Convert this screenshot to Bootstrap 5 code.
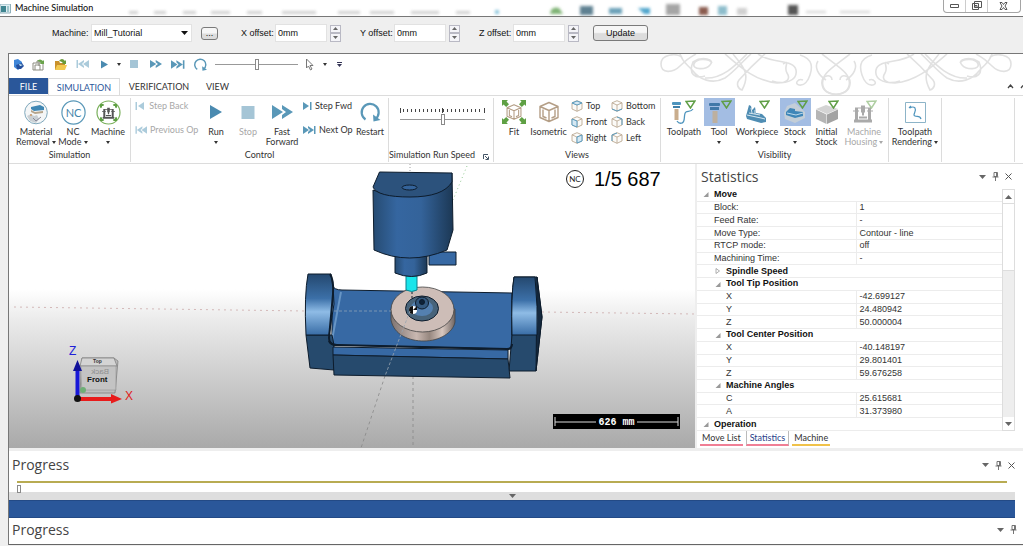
<!DOCTYPE html>
<html lang="en">
<head>
<meta charset="utf-8">
<meta name="viewport" content="width=device-width, initial-scale=1">
<title>Machine Simulation</title>
<link href="https://cdn.jsdelivr.net/npm/bootstrap@5.3.0/dist/css/bootstrap.min.css" rel="stylesheet">
<style>
:root{--ui:Lato,"Open Sans",sans-serif;--head:"Open Sans","Noto Sans",sans-serif;--cls:"Liberation Sans",sans-serif;--navy:#2a579a;--rule:#dcdcdc}
body{font-family:var(--ui);font-size:9px;line-height:10px;color:#333;background:#efefef;min-height:100vh;overflow:hidden}
button,input,select{font:inherit;color:inherit}
button{border:0;background:none;padding:0}
svg{display:block}
.titlebar{height:17px;background:#fff;border-bottom:1px solid #777;position:relative}
.titlebar h1{font-size:9px;line-height:15px;margin:0;color:#111}
.glass{position:absolute;left:0;top:0;width:100%;height:16px}
.winbtns{height:13px;border:1px solid #a5a5a5;border-top:0;border-radius:0 0 4px 4px;background:#fff;width:78px;margin-right:2px;position:relative}
.winbtns button{flex:1 1 22px;display:flex;justify-content:center;align-items:center}
.winbtns button+button{border-left:1px solid #ccc}
.winbtns button:last-child{flex-basis:34px}
.setup{height:36px;font-family:var(--cls);color:#111;padding:0 0 4px 52px}
.setup label{width:34px;white-space:nowrap}
.setup label:first-child{width:39px}
.setup input,.setup select{height:18px;border:1px solid #e2e2e2;background:#fff;padding:0 2px;border-radius:0;outline:0}
.setup select{width:101px;appearance:none}
.combo{position:relative}
.combo svg{position:absolute;right:4px;top:7px}
.setup input{width:52px}
.spin{width:11px;height:17px;display:flex;flex-direction:column;margin:0 19px 0 3px}
.spin:nth-last-child(2){margin-right:14px}
.spin button{flex:1;border:1px solid #b9b9c4;background:#f4f4f8;display:flex;align-items:center;justify-content:center}
.winbtn{border:1px solid #7a7a7a;border-radius:3px;background:linear-gradient(#f6f6f6 45%,#dcdcdc 55%);height:16px;line-height:13px;width:55px}
.winbtn.browse{width:17px;height:13px;line-height:8px;margin:0 23px 0 9px}
.shell{margin-left:8px;background:#fff;border-left:1px solid #777;border-top:1px solid #777}
.qat{height:24px;position:relative}
.qat button{width:22px;height:20px;display:flex;align-items:center;justify-content:center}
.qat .narrow{width:10px}
.swirl{position:absolute;right:6px;top:0}
.tabs{height:17px}
.tabs button{height:16px;line-height:15px}
.tabs .tab-file{background:var(--navy);color:#fff;width:39px}
.tabs .tab-on{border:1px solid var(--rule);border-bottom:0;background:#fff;color:var(--navy);width:72px;height:17px}
.ribbon{border-top:1px solid var(--rule);border-bottom:1px solid var(--rule);height:69px;padding-top:2px}
.grp{border-right:1px solid var(--rule);height:64px;display:flex;flex-direction:column;flex:none;justify-content:space-between}
.grp>footer{text-align:center;height:12px;line-height:10px;white-space:nowrap}
.big{display:flex;flex-direction:column;align-items:center;flex:none;white-space:nowrap;line-height:10px}
.big .ico{height:28px;width:31px;display:flex;align-items:center;justify-content:center;margin-bottom:1px}
.big.on .ico{background:#a3bde3}
.mini{display:flex;align-items:center;gap:3px;height:16px;white-space:nowrap}
.off{color:#a8a8a8}
.car{display:inline-block;border:2px solid transparent;border-top:3px solid currentColor;border-bottom:0;vertical-align:1px}
.speed{padding:10px 8px 0 11px}
input[type=range]{appearance:none;background:transparent;height:12px;margin:0;display:block}
input[type=range]::-webkit-slider-runnable-track{height:1px;background:#999}
input[type=range]::-webkit-slider-thumb{appearance:none;width:4px;height:11px;margin-top:-5px;border:1px solid #8a8a8a;background:#fff;border-radius:0}
.work{height:284px}
.view{min-width:0;background:linear-gradient(#fff 44%,#e9e9e9 56%,#a9a9a9)}
.stats{width:328px;border-left:2px solid #eee}
.pane-h{height:25px;padding:0 10px 0 4px}
.pane-h h2,.prog h2{font-family:var(--head);font-size:14px;line-height:20px;margin:0;color:#444}
.tools{display:flex;gap:3px}
.tools button{width:10px;height:10px;display:flex;align-items:center;justify-content:center}
.sheet{height:242px;padding-right:7px}
.sheet table{width:305px;height:100%;font-family:var(--cls);line-height:11px;color:#333}
.sheet th,.sheet td{padding:0 0 0 17px;border-bottom:1px solid #ececec;font-weight:400}
.sheet td{padding-left:3px;border-left:1px solid #ececec;width:146px}
.sheet .hd{font-weight:700;color:#111;padding-left:6px}
.sheet .sub .hd{padding-left:18px}
.sheet .in th{padding-left:29px}
.tw{display:inline-block;width:6px;margin-right:5px}
.sbar{width:13px;background:#eee;border:1px solid #ddd}
.sbar button{height:13px;background:#fff;display:flex;align-items:center;justify-content:center}
.sbar i{height:68px;background:#fff;border:1px solid #ddd;border-width:1px 0}
.ptabs button{height:15px;border-bottom:2px solid #f07f95;margin-left:3px;padding:0 2px}
.ptabs .cur{border-left:1px solid #bbb;border-right:1px solid #bbb;color:#2a3f8a;padding:0 3px}
.ptabs .gold{border-bottom-color:#f0c24a}
.prog{border-top:3px solid #eee;height:44px}
.prog-h{height:28px;padding:0 7px 0 3px}
.prog input[type=range]{width:100%;height:13px;margin-top:-4px}
.prog input[type=range]::-webkit-slider-runnable-track{height:2px;background:#b8ab52}
.prog input[type=range]::-webkit-slider-thumb{margin-top:4px;height:8px}
.fold{height:8px;background:#dedede;display:flex;justify-content:center;align-items:center}
.band{height:18px;background:var(--navy);border:1px solid #234a86;border-width:1px 0}
.last{border-top:0;height:27px;border-bottom:1px solid #666}
.last .prog-h{height:23px;padding-right:5px}
</style>
</head>
<body>
<svg width="0" height="0" class="position-absolute" aria-hidden="true">
<defs>
<symbol id="play" viewBox="0 0 12 14"><path d="M0 0l12 7-12 7z" fill="#4a8ab0"/></symbol>
<symbol id="stop" viewBox="0 0 10 10"><path d="M0 0h10v10H0z" fill="#a5c5d6"/></symbol>
<symbol id="ff" viewBox="0 0 21 14"><path d="M0 0l11 7-11 7zM10 0l11 7-11 7v-4l4-3-4-3z" fill="#5a98b8"/></symbol>
<symbol id="next" viewBox="0 0 13 8"><path d="M0 0l6 4-6 4zM5 0l6 4-6 4V6l2-2-2-2zM11 0h1.500v8H11z" fill="#5a98b8"/></symbol>
<symbol id="step" viewBox="0 0 9 8"><path d="M0 0l6 4-6 4zM7 0h1.500v8H7z" fill="#5a98b8"/></symbol>
<symbol id="redo" viewBox="0 0 20 20"><path d="M5 17.500A8.500 8.500 0 1 1 15 17" fill="none" stroke="#5a98b8" stroke-width="2.200"/><path d="M12.500 12.500l.5 7 7-1.500z" fill="#5a98b8"/></symbol>
<symbol id="cube" viewBox="0 0 22 22"><path d="M11 1.500l9 4v11l-9 4-9-4v-11zM2 5.500l9 4 9-4M11 9.500v11M5 8.500v7l3.500 1.500M17 8.500v7l-3.500 1.500" fill="none" stroke="#b49e86" stroke-width="1.400" stroke-linejoin="round"/></symbol>
<symbol id="cubes" viewBox="0 0 12 12"><path d="M6 .7l5 2.100v6.200l-5 2.300-5-2.300V2.800zM1 2.800L6 5l5-2.200M6 5v6.300" fill="#fbfaf7" stroke="#bba993" stroke-width=".9"/></symbol>
<symbol id="tri" viewBox="0 0 11 9"><path d="M1 1.500L10 1 5.500 8z" fill="none" stroke="#5f9e46" stroke-width="1.500"/></symbol>
<symbol id="corners" viewBox="0 0 24 24"><path d="M0 0h6L4.500 1.500 7 4.200 4.200 7 1.500 4.500 0 6zM24 0h-6l1.500 1.500L17 4.200 19.800 7l2.700-2.500L24 6zM0 24h6l-1.500-1.500L7 19.800 4.200 17l-2.700 2.500L0 18zM24 24h-6l1.500-1.500-2.500-2.700 2.800-2.800 2.700 2.500L24 18z" fill="#5fa044"/></symbol>
<symbol id="mill" viewBox="0 0 20 18"><path d="M1 15h18v3H1zM2 3h3v12H2zM15 3h3v12h-3zM0 6h6v1H0zM14 6h6v1h-6zM8 1h4v7H8zM9 8h2v3H9zM6 12h8v2H6zM5 3h3v1H5zM12 3h3v1h-3z" fill="currentColor"/></symbol>
<symbol id="dn" viewBox="0 0 7 4"><path d="M0 0h7L3.500 4z" fill="#666"/></symbol>
<symbol id="up" viewBox="0 0 7 4"><path d="M0 4h7L3.500 0z" fill="#666"/></symbol>
<symbol id="pin" viewBox="0 0 7 9"><path d="M2 .5h3.500v4H2zM4.500.5v4M.5 5h6M3.500 5v4" fill="none" stroke="#666" stroke-width=".9"/></symbol>
<symbol id="x" viewBox="0 0 7 7"><path d="M.5.5l6 6m0-6l-6 6" stroke="#555" fill="none"/></symbol>
<symbol id="open" viewBox="0 0 6 6"><path d="M6 0v6H0z" fill="#999"/></symbol>
<symbol id="shut" viewBox="0 0 6 6"><path d="M1 .5v5L4.500 3z" fill="none" stroke="#999" stroke-width=".8"/></symbol>
</defs></svg>

<header class="titlebar d-flex align-items-start">
  <svg class="glass" viewBox="0 0 1023 16" preserveAspectRatio="xMaxYMid slice" aria-hidden="true"><defs><filter id="haze" x="-50%" y="-50%" width="200%" height="200%"><feGaussianBlur stdDeviation="1.500"/></filter></defs>
    <g filter="url(#haze)" fill="#d0d0d0"><path d="M129 11h9v3h-9zM154 11h12v3h-12zM183 11h13v3h-13zM211 11h19v3h-19zM247 11h15v3h-15zM282 11h34v3h-34zM338 11h22v3h-22zM370 11h24v3h-24zM411 11h28v3h-28zM456 11h14v3h-14zM806 11h20v2h-20zM840 11h30v2h-30zM737 8h10v7h-10z"/><path d="M495 10h4v4h-4z" fill="#8ac4dc"/><path d="M550 14q1-8 9-6l4 6z" fill="#7eb273"/><path d="M580 6h13v9h-13z" fill="#5f8192"/><path d="M609 8h13v6h-13z" fill="#6ba0b8"/><path d="M638 8h12v6h-6z" fill="#4fa5cc"/><path d="M666 4h14v11h-14z" fill="#a5a5a5"/><path d="M699 7h9v8h-9z" fill="#8a5c50"/><path d="M718 6h9v9h-9z" fill="#8dbdcc"/><path d="M788 5h10v10h-10z" fill="#555"/></g></svg>
  <svg width="11" height="11" viewBox="0 0 11 11" class="mt-1 position-relative"><path d="M0 0h10.500v9H0z" fill="#dfeef2" stroke="#8fb0bb"/><path d="M1 2h5v6H1z" fill="#3f8590"/><path d="M7 2h2v6H7z" fill="#9fc6cc"/></svg>
  <h1 class="ms-1 position-relative">Machine Simulation</h1>
  <div class="winbtns d-flex ms-auto">
    <button aria-label="Minimize"><svg width="9" height="4"><path d="M.5.500h8v3h-8z" fill="#fff" stroke="#555"/></svg></button>
    <button aria-label="Restore"><svg width="10" height="10"><path d="M2.500.500h7v6h-7zM.5 2.500h6v6h-6zM3 4.500h2v2H3z" fill="#fff" stroke="#555"/></svg></button>
    <button aria-label="Close"><svg width="9" height="8"><path d="M1 .5h2L4.500 2.500 6 .5h2L6 4l2 3.500H6L4.500 5.500 3 7.500H1L3 4z" fill="#fff" stroke="#555"/></svg></button>
  </div>
</header>

<form class="setup d-flex align-items-center" onsubmit="return false">
  <label for="mc">Machine:</label>
  <div class="combo"><select id="mc"><option>Mill_Tutorial</option></select><svg width="7" height="4"><path d="M0 0h7L3.500 4z" fill="#111"/></svg></div>
  <button class="winbtn browse" aria-label="Browse">...</button>
  <label for="xo">X offset:</label><input id="xo" value="0mm">
  <span class="spin"><button aria-label="X up"><svg width="5" height="3"><use href="#up"/></svg></button><button aria-label="X down"><svg width="5" height="3"><use href="#dn"/></svg></button></span>
  <label for="yo">Y offset:</label><input id="yo" value="0mm">
  <span class="spin"><button aria-label="Y up"><svg width="5" height="3"><use href="#up"/></svg></button><button aria-label="Y down"><svg width="5" height="3"><use href="#dn"/></svg></button></span>
  <label for="zo">Z offset:</label><input id="zo" value="0mm">
  <span class="spin"><button aria-label="Z up"><svg width="5" height="3"><use href="#up"/></svg></button><button aria-label="Z down"><svg width="5" height="3"><use href="#dn"/></svg></button></span>
  <button class="winbtn">Update</button>
</form>

<main class="shell">
  <div class="qat d-flex">
    <svg class="swirl" width="357" height="41" viewBox="660 53 357 41" fill="none" stroke="#e1e1e1" stroke-width="1.600" aria-hidden="true">
      <g id="half"><path d="M682 56c-6-4-21-3-21 7s12 9 19 2 12-10 16-12M680 53c3 9 6 9 13 17 6 8 19 14 32 7 8-5 17-16 26-24M712 62c-3-5-16-5-18 1s12 6 16 1c6-6-8-9-17-3-5 12 2 17 12 14M725 53c14 12 30 27 52 29 10 0 14-4 10-10s4-14-4-9M747 53c-10 10-24 25-42 24M733 53c10 12 18 20 9 36-4-1-6-6-3-10 8-9 18-19 26-26M758 53c14 10 36 5 38 16s-12 15-24 11M800 54c14 4 12 14 10 20s-6 11-11 10-1-7 4-5M822 53c18 14 30 20 27 32-3 12-26 11-27-2-1-9 10-11 10-4M818 60c-4 6 0 14 8 19"/></g>
      <use href="#half" transform="matrix(-1 0 0 1 1672 0)"/>
    </svg>
    <button style="width:18px" aria-label="Application"><svg width="11" height="12" viewBox="0 0 11 12"><path d="M1 2l4-1 4 3v5L5 12 1 9z" fill="#3f86d8"/><path d="M3 7l6-2 2 3-3 3H4z" fill="#254f9c"/><path d="M6 6l4 1-3 1z" fill="#dff"/></svg></button>
    <button aria-label="Load machine"><svg width="13" height="13" viewBox="0 0 13 13"><path d="M1 5h10v7H1zM3 12V7h5v5M5 5V3h2v5" fill="none" stroke="#8c8c80"/><path d="M5 3q3-3 6 0l1-1v4H8l1-1q-2-2-4-2z" fill="#69a34a"/></svg></button>
    <button aria-label="Open"><svg width="13" height="13" viewBox="0 0 13 13"><path d="M1 3h4l1 2h5v7H1z" fill="#c9912b"/><path d="M3 7h10l-2 5H1z" fill="#f2c94f"/><path d="M5 3q3-4 6 0l1-1v4H8l1-1q-2-2-4-2z" fill="#6a9a3a"/></svg></button>
    <button aria-label="Previous" class="opacity-50"><svg width="13" height="8" style="transform:scaleX(-1)"><use href="#next"/></svg></button>
    <button aria-label="Run"><svg width="7" height="9"><use href="#play"/></svg></button>
    <button style="width:8px" aria-label="Run menu"><i class="car"></i></button>
    <button aria-label="Stop"><svg width="8" height="8"><use href="#stop"/></svg></button>
    <button aria-label="Fast forward"><svg width="12" height="8"><use href="#ff"/></svg></button>
    <button aria-label="Next operation"><svg width="14" height="9"><use href="#next"/></svg></button>
    <button aria-label="Restart"><svg width="13" height="13"><use href="#redo"/></svg></button>
    <input type="range" class="ms-1 mt-1" style="width:83px" aria-label="Speed">
    <button aria-label="Pick"><svg width="9" height="13"><path d="M1.500 1v9l2-2 2 4 1.500-1-2-3.500h3z" fill="#fff" stroke="#777"/></svg></button>
    <button class="narrow" aria-label="Pick menu"><i class="car"></i></button>
    <button class="narrow ms-1" aria-label="Customize"><svg width="5" height="7"><path d="M0 1.500h5" stroke="#335"/><path d="M0 3h5L2.500 6z" fill="#335"/></svg></button>
  </div>

  <nav class="tabs d-flex" aria-label="Ribbon tabs">
    <button class="tab-file">FILE</button>
    <button class="tab-on">SIMULATION</button>
    <button style="width:78px">VERIFICATION</button>
    <button style="width:39px">VIEW</button>
    <svg class="ms-auto mt-1" width="18" height="8"><path d="M3 6l2.500-3L8 6M16 6l2-2.500" fill="none" stroke="#444" stroke-width="1.300"/></svg>
  </nav>

  <div class="ribbon d-flex">
    <section class="grp" style="width:122px">
      <div class="d-flex ps-2">
        <button class="big" style="width:38px"><span class="ico"><svg width="24" height="25" viewBox="0 0 24 25"><circle cx="12" cy="12.500" r="11.300" fill="#f4f6f7" stroke="#7fa8bc"/><path d="M7 7l9-2 4 2v3l-10 1-3-2z" fill="#3f87b4"/><path d="M7 10l4 2 8-1v2l-8 1-4-2z" fill="#b6a58c"/><path d="M3 16l4-2 3 2 3-1 2 4-3 4-6-2z" fill="#c9cfd3"/><circle cx="7" cy="15" r="1" fill="#c96"/><path d="M9 18l3 3 5-4" fill="none" stroke="#889"/></svg></span>Material<span>Removal <i class="car"></i></span></button>
        <button class="big" style="width:36px"><span class="ico"><svg width="25" height="25" viewBox="0 0 25 25"><circle cx="12.500" cy="12.500" r="11.600" fill="#fff" stroke="#5a98b8" stroke-width="1.200"/><text x="12.500" y="16.500" text-anchor="middle" font-size="11" fill="#3f85ab">NC</text></svg></span>NC<span>Mode <i class="car"></i></span></button>
        <button class="big" style="width:34px"><span class="ico"><svg width="25" height="25" viewBox="0 0 25 25" color="#555"><circle cx="12.500" cy="12.500" r="11.500" fill="#fff" stroke="#7ab05c" stroke-width="1.200"/><use href="#corners" x="4" y="4" width="17" height="17"/><path d="M6 6h13v13H6z" fill="#fff"/><use href="#mill" x="6" y="7" width="13" height="12"/></svg></span>Machine<i class="car mt-1"></i></button>
      </div><footer>Simulation</footer>
    </section>
    <section class="grp" style="width:258px">
      <div class="d-flex ps-1">
        <div class="off" style="width:66px">
          <button class="mini"><svg width="9" height="8" style="transform:scaleX(-1);opacity:.5"><use href="#step"/></svg>&nbsp;Step Back</button>
          <button class="mini mt-2"><svg width="12" height="8" style="transform:scaleX(-1);opacity:.5"><use href="#next"/></svg>Previous Op</button>
        </div>
        <button class="big" style="width:30px"><span class="ico"><svg width="12" height="14"><use href="#play"/></svg></span>Run<i class="car mt-1"></i></button>
        <button class="big off" style="width:34px"><span class="ico"><svg width="14" height="13" preserveAspectRatio="none"><use href="#stop"/></svg></span>Stop</button>
        <button class="big" style="width:34px"><span class="ico"><svg width="21" height="14"><use href="#ff"/></svg></span>Fast<span>Forward</span></button>
        <div class="ps-1" style="width:54px">
          <button class="mini"><svg width="9" height="8"><use href="#step"/></svg>Step Fwd</button>
          <button class="mini mt-2"><svg width="13" height="8"><use href="#next"/></svg>Next Op</button>
        </div>
        <button class="big" style="width:34px"><span class="ico"><svg width="21" height="20"><use href="#redo"/></svg></span>Restart</button>
      </div><footer>Control</footer>
    </section>
    <section class="grp" style="width:105px">
      <div class="speed">
        <svg width="100%" height="5" viewBox="0 0 85 5"><path d="M3 2.500h80" stroke="#444" stroke-width="3" stroke-dasharray="1 3"/><path d="M.5 0v5M42.500 0v5M84.500 0v5" stroke="#444"/></svg>
        <input type="range" class="w-100" aria-label="Simulation run speed">
      </div><footer class="d-flex justify-content-end pe-1 gap-2">Simulation Run Speed<svg width="6" height="6" class="mt-1"><path d="M.5 5V.5H5M2 2l3 3M5.500 2.500v3h-3" fill="none" stroke="#456"/></svg></footer>
    </section>
    <section class="grp" style="width:167px">
      <div class="d-flex ps-1">
        <button class="big" style="width:32px"><span class="ico"><svg width="24" height="24" viewBox="0 0 24 24"><use href="#corners"/><use href="#cube" x="3.500" y="3.500" width="17" height="17"/></svg></span>Fit</button>
        <button class="big" style="width:37px"><span class="ico"><svg width="22" height="22"><use href="#cube"/></svg></span>Isometric</button>
        <div class="ps-1" style="width:44px">
          <button class="mini"><svg width="12" height="12"><use href="#cubes"/><path d="M1 3l5-2 5 2-5 2z" fill="#d6e8f2" stroke="#5b9cc0"/></svg>Top</button>
          <button class="mini"><svg width="12" height="12"><use href="#cubes"/><path d="M1 3l5 2v6L1 9z" fill="#d6e8f2" stroke="#5b9cc0"/></svg>Front</button>
          <button class="mini"><svg width="12" height="12"><use href="#cubes"/><path d="M6 5l5-2v6l-5 2z" fill="#d6e8f2" stroke="#5b9cc0"/></svg>Right</button>
        </div>
        <div>
          <button class="mini"><svg width="12" height="12"><use href="#cubes"/><path d="M1 9l5 2 5-2" fill="none" stroke="#5b9cc0"/></svg>Bottom</button>
          <button class="mini"><svg width="12" height="12"><use href="#cubes"/><path d="M6 1l5 2v6" fill="none" stroke="#5b9cc0"/></svg>Back</button>
          <button class="mini"><svg width="12" height="12"><use href="#cubes"/><path d="M6 1L1 3v6" fill="none" stroke="#5b9cc0"/></svg>Left</button>
        </div>
      </div><footer>Views</footer>
    </section>
    <section class="grp" style="width:228px">
      <div class="d-flex ps-1">
        <button class="big" style="width:38px"><span class="ico"><svg width="26" height="26" viewBox="0 0 26 26"><rect x="1" y="3" width="9" height="3" rx="1" fill="#4e94bd"/><rect x="2" y="7" width="7" height="2" fill="#3f7fa8"/><rect x="3.500" y="10" width="4" height="11" fill="#c9ad8d"/><path d="M6 22q2 3 5 2c4-1 1-9 4-11 2-1 5 0 7-3" fill="none" stroke="#4e94bd" stroke-width="1.300"/><use href="#tri" x="14" y="1" width="11" height="9"/></svg></span>Toolpath</button>
        <button class="big on" style="width:32px"><span class="ico"><svg width="26" height="26" viewBox="0 0 26 26"><rect x="3" y="4" width="11" height="3" rx="1" fill="#4178a8"/><rect x="4" y="8" width="9" height="3" fill="#4178a8"/><rect x="6.500" y="12" width="5" height="12" fill="#bdb0a0"/><use href="#tri" x="15" y="1" width="11" height="9"/></svg></span>Tool<i class="car mt-1"></i></button>
        <button class="big" style="width:44px"><span class="ico"><svg width="28" height="26" viewBox="0 0 28 26"><path d="M3 17l3-11 2 1 1 4 3-3 1 6 6 1 4 4v4l-5 1-14-4z" fill="#4f8db3"/><path d="M4 16l14 3 4 1M8 9l1 5M6 14l11 2M12 11l0 4" stroke="#d6e6ef" fill="none"/><use href="#tri" x="16" y="1" width="11" height="9"/></svg></span>Workpiece<i class="car mt-1"></i></button>
        <button class="big on" style="width:32px"><span class="ico"><svg width="28" height="26" viewBox="0 0 28 26"><path d="M3 14l3-7 8-3 10 9 0 6-10 5-10-4z" fill="#c3ced8"/><path d="M5 13l4-4 5 1v2l8 1v4l-8 2-9-3z" fill="#3f86b8"/><path d="M6 14l9 2 7-2" stroke="#bcd9ea" fill="none"/><use href="#tri" x="16" y="1" width="11" height="9"/></svg></span>Stock<i class="car mt-1"></i></button>
        <button class="big" style="width:31px"><span class="ico"><svg width="26" height="26" viewBox="0 0 26 26"><path d="M2 10l10-4 12 4-11 5z" fill="#d4d4d4"/><path d="M2 10.500l10.500 5V25L2 20z" fill="#b5b5b5"/><path d="M24 10.500l-11 5V25l11-5z" fill="#a3a3a3"/><use href="#tri" x="14" y="1" width="11" height="9"/></svg></span>Initial<span>Stock</span></button>
        <button class="big off" style="width:44px"><span class="ico"><svg width="26" height="26" viewBox="0 0 26 26" color="#aaa"><use href="#mill" x="2" y="5" width="20" height="19"/><use href="#tri" x="15" y="1" width="11" height="9" opacity=".5"/></svg></span>Machine<span>Housing <i class="car"></i></span></button>
      </div><footer>Visibility</footer>
    </section>
    <section class="grp" style="width:53px">
      <button class="big"><span class="ico"><svg width="21" height="21"><path d="M.5.500h20v20H.5z" fill="#fff" stroke="#8db4c8"/><path d="M5 6q3-2 5 0c2 3-3 7 0 8 2 1 5-1 6 3M4 6l2-2" fill="none" stroke="#4e94bd" stroke-width="1.200"/></svg></span>Toolpath<span>Rendering <i class="car"></i></span></button>
    </section>
    <section class="grp flex-fill me-2"></section>
  </div>

  <div class="work d-flex">
    <div class="view flex-fill">
      <svg width="100%" height="284" viewBox="9 164 686 284" role="img" aria-label="Machine model">
        <defs>
          <linearGradient id="cyl"><stop offset="0" stop-color="#264b72"/><stop offset=".3" stop-color="#3566a0"/><stop offset=".6" stop-color="#34639a"/><stop offset="1" stop-color="#1c3855"/></linearGradient>
          <linearGradient id="ear" x2="0" y2="1"><stop offset="0" stop-color="#24486f"/><stop offset=".4" stop-color="#3c70a8"/><stop offset=".62" stop-color="#8fbce6"/><stop offset="1" stop-color="#386ca5"/></linearGradient>
          <linearGradient id="ring"><stop offset="0" stop-color="#7f7471"/><stop offset=".4" stop-color="#c9b8b1"/><stop offset=".6" stop-color="#96877f"/><stop offset=".8" stop-color="#d8c8c0"/><stop offset="1" stop-color="#6f6562"/></linearGradient>
        </defs>
        <g stroke="#888" stroke-width=".8" fill="none"><path d="M14 307l292 4M542 312l153 2" stroke="#caa" stroke-dasharray="2 4"/><path d="M410 164v8" stroke-dasharray="1 2"/><path d="M467 166l-14 34" stroke="#7b7" stroke-dasharray="1 3"/><path d="M413 376v72M385 376l-24 72" stroke-dasharray="3 3"/></g>
        <g stroke="#0d1c2c" stroke-linejoin="round">
          <path d="M332 285q2 5 10 5l170 3v56l-180-4z" fill="#3769a4"/>
          <path d="M341 292l-9 48" stroke="#6795c5" stroke-width="2"/>
          <path d="M306 335l26 0 2 10v25l-24-2z" fill="#264a6d"/>
          <path d="M308 274h23q3 15 3 30l-5 31h-23q-2-40 2-61z" fill="url(#ear)"/>
          <path d="M330 274q4 6 3 20l-4 44q0 7 8 7" fill="none" stroke-width="2"/>
          <path d="M514 277h23l5 40-6 54h-27l3-36q-1-40 2-58z" fill="#264a6d"/>
          <path d="M537 277l5 40-6 54z" fill="#15293e"/>
          <path d="M514 277h21q3 30 2 58h-25q-1-40 2-58z" fill="url(#ear)"/>
          <path d="M329 341q2 4 8 4l170 4q5 0 5-5" fill="none" stroke-width="2"/>
          <path d="M333 347l175 3v9l-175-4z" fill="#3769a4"/>
          <path d="M333 355l175 4 2 19-176-3z" fill="#264a6d"/>
          <path d="M391 309v11c3 15 18 21 33 21s29-8 31-19v-13z" fill="url(#ring)" stroke="#444" stroke-width=".8"/>
          <ellipse cx="422.500" cy="309.500" rx="31.500" ry="22.500" fill="#cdbdb7" stroke="#444" stroke-width=".8"/>
          <ellipse cx="422" cy="308.500" rx="16.500" ry="12.500" fill="#47637a"/>
          <ellipse cx="422" cy="308" rx="11" ry="8" fill="#5480b0" stroke="none"/>
          <ellipse cx="422" cy="303" rx="6.500" ry="6" fill="#34597f"/><circle cx="422" cy="302" r="2.500" fill="#0f2238"/>
          <circle cx="413" cy="310" r="4" fill="#fff" stroke="none"/><path d="M413 306a4 4 0 0 0 0 8zM413 310h4v-4z" fill="#111" stroke="none"/>
          <path d="M334 311h57" stroke="#9ab" stroke-width=".7" stroke-dasharray="3 2"/>
          <path d="M410 311l-25 65" stroke="#99a4b0" stroke-width=".8" stroke-dasharray="3 2"/>
          <path d="M412 292v8" stroke-dasharray="2 2"/>
          <path d="M406 276h11v14q-5 3-11 0z" fill="#19e4ea" stroke="#0a7f8c"/>
          <path d="M395 254h32v19q-15 7-32 0z" fill="url(#cyl)"/>
          <path d="M429 252h27v13h-27z" fill="#3769a4"/>
          <path d="M373 190q37 16 79-17l1 57-6 20q-38 16-73 0z" fill="url(#cyl)"/>
          <path d="M379.500 172l72.500 1v9q-9 15-42 15t-37-10z" fill="#2c527c"/>
          <ellipse cx="409.500" cy="187.500" rx="7.500" ry="2.500" fill="#34639a"/>
        </g>
        <circle cx="575" cy="179" r="8.500" fill="#fff" stroke="#222"/><text x="575" y="182" font-size="8" text-anchor="middle" fill="#222">NC</text>
        <text x="594" y="186" font-family="Liberation Sans" font-size="20" fill="#000">1/5 687</text>
        <path d="M553 414h127v15H553z" fill="#000"/><path d="M555 417v9M678 417v9M555 422h41M637 422h41" stroke="#ddd"/>
        <text x="616.500" y="425" font-family="Liberation Mono" font-weight="700" font-size="10" text-anchor="middle" fill="#fff">626 mm</text>
        <g font-family="Liberation Sans"><path d="M82 358h32l4 3-3 32H80z" fill="#bdbdbd" stroke="#777" stroke-width=".7"/><path d="M82 358h32l3 8H80z" fill="#d4d4d4" stroke="#777" stroke-width=".7"/><path d="M80 366h36v24H82z" fill="#c6c6c6" fill-opacity=".7" stroke="#888" stroke-width=".5"/><circle cx="83" cy="390" r="3" fill="#6eae76"/>
          <text x="93" y="363" font-size="5" font-weight="700" fill="#333">Top</text><text transform="matrix(-1 0 0 1 109 374)" font-size="8" fill="#909090">Back</text><text x="87" y="382" font-size="8" font-weight="700" fill="#111">Front</text>
          <path d="M77.500 398V368" stroke="#1717d8" stroke-width="4"/><path d="M73 371l4.500-11 4.500 11z" fill="#10109a"/><path d="M78 399h36" stroke="#e81b1b" stroke-width="4"/><path d="M111 394l11 5-11 4.500z" fill="#e81b1b"/><circle cx="77.500" cy="398.500" r="3.500" fill="#111"/>
          <text x="69" y="355" font-size="12" fill="#2020d8">Z</text><text x="125" y="400" font-size="12" fill="#e02020">X</text></g>
      </svg>
    </div>
    <aside class="stats flex-shrink-0">
      <header class="pane-h d-flex align-items-center justify-content-between"><h2>Statistics</h2><div class="tools"><button aria-label="Menu"><svg width="7" height="4"><use href="#dn"/></svg></button><button aria-label="Pin"><svg width="7" height="9"><use href="#pin"/></svg></button><button aria-label="Close"><svg width="7" height="7"><use href="#x"/></svg></button></div></header>
      <div class="sheet d-flex">
        <table><tbody>
          <tr><th class="hd" colspan="2"><svg class="tw" width="5" height="5"><use href="#open"/></svg>Move</th></tr>
          <tr><th>Block:</th><td>1</td></tr><tr><th>Feed Rate:</th><td>-</td></tr><tr><th>Move Type:</th><td>Contour - line</td></tr><tr><th>RTCP mode:</th><td>off</td></tr><tr><th>Machining Time:</th><td>-</td></tr>
          <tr class="sub"><th class="hd" colspan="2"><svg class="tw" width="6" height="6"><use href="#shut"/></svg>Spindle Speed</th></tr>
          <tr class="sub"><th class="hd" colspan="2"><svg class="tw" width="5" height="5"><use href="#open"/></svg>Tool Tip Position</th></tr>
          <tr class="in"><th>X</th><td>-42.699127</td></tr><tr class="in"><th>Y</th><td>24.480942</td></tr><tr class="in"><th>Z</th><td>50.000004</td></tr>
          <tr class="sub"><th class="hd" colspan="2"><svg class="tw" width="5" height="5"><use href="#open"/></svg>Tool Center Position</th></tr>
          <tr class="in"><th>X</th><td>-40.148197</td></tr><tr class="in"><th>Y</th><td>29.801401</td></tr><tr class="in"><th>Z</th><td>59.676258</td></tr>
          <tr class="sub"><th class="hd" colspan="2"><svg class="tw" width="5" height="5"><use href="#open"/></svg>Machine Angles</th></tr>
          <tr class="in"><th>C</th><td>25.615681</td></tr><tr class="in"><th>A</th><td>31.373980</td></tr>
          <tr><th class="hd" colspan="2"><svg class="tw" width="5" height="5"><use href="#open"/></svg>Operation</th></tr>
        </tbody></table>
        <div class="sbar d-flex flex-column"><button aria-label="Scroll up"><svg width="7" height="4"><use href="#up"/></svg></button><i></i><button class="mt-auto" aria-label="Scroll down"><svg width="7" height="4"><use href="#dn"/></svg></button></div>
      </div>
      <div class="ptabs d-flex"><button>Move List</button><button class="cur">Statistics</button><button class="gold">Machine</button></div>
    </aside>
  </div>

  <section class="prog">
    <header class="prog-h d-flex align-items-center justify-content-between"><h2>Progress</h2><div class="tools"><button aria-label="Menu"><svg width="7" height="4"><use href="#dn"/></svg></button><button aria-label="Pin"><svg width="7" height="9"><use href="#pin"/></svg></button><button aria-label="Close"><svg width="7" height="7"><use href="#x"/></svg></button></div></header>
    <div class="ps-2 pe-3"><input type="range" value="0" aria-label="Progress"></div>
  </section>
  <div class="me-2">
  <div class="fold"><svg width="7" height="4"><use href="#dn"/></svg></div>
  <div class="band"></div></div>
  <section class="prog last"><header class="prog-h d-flex align-items-center justify-content-between"><h2>Progress</h2><div class="tools"><button aria-label="Menu"><svg width="7" height="4"><use href="#dn"/></svg></button><button aria-label="Pin"><svg width="7" height="9"><use href="#pin"/></svg></button></div></header></section>
</main>
<script src="https://cdn.jsdelivr.net/npm/bootstrap@5.3.0/dist/js/bootstrap.bundle.min.js"></script>
</body>
</html>
